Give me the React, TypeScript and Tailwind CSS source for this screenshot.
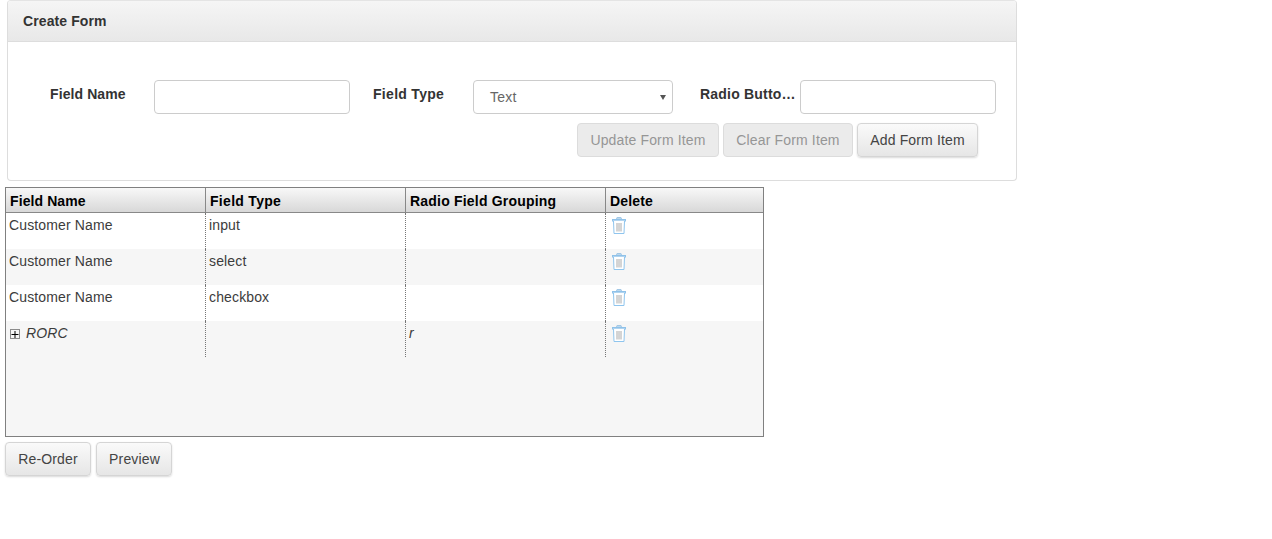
import React from "react";

const font = { fontFamily: '"Liberation Sans", Arial, sans-serif' };

function Trash() {
  return (
    <svg width="16" height="20" viewBox="0 0 16 20" fill="none">
      <path d="M5.5 3 L6 1.5 H10 L10.5 3" stroke="#a2c8e6" strokeWidth="1" fill="#bdd8ec" />
      <rect x="1.5" y="3.5" width="13" height="1.5" fill="#d3e6f4" stroke="#8fc2ea" strokeWidth="1" />
      <path d="M2.5 5 L3 17.5 H13 L13.5 5" stroke="#8fc5ee" strokeWidth="1" fill="#fff" />
      <path d="M6 7 V15.5 M8 7 V15.5 M10 7 V15.5" stroke="#aaaaaa" strokeWidth="1" />
    </svg>
  );
}

function PlusBox() {
  return (
    <svg width="10" height="10" viewBox="0 0 10 10" className="block shrink-0">
      <rect x="0.5" y="0.5" width="9" height="9" fill="none" stroke="#222" strokeDasharray="1 1" />
      <path d="M1.5 5.5 H8.5 M5 2 V9" stroke="#000" strokeWidth="1" />
    </svg>
  );
}

const btn =
  "h-[34px] rounded-[4px] border border-[#d5d5d5] text-[14px] text-[#444] tracking-[0.15px] bg-gradient-to-b from-[#fafafa] to-[#e6e6e6] shadow-[0_1px_2px_rgba(0,0,0,0.15)] flex items-center justify-center";
const disabledBtn =
  "h-[34px] rounded-[4px] border border-[#dcdcdc] text-[14px] text-[#969696] tracking-[0.15px] bg-[#ebebeb] flex items-center justify-center";
const input = "h-[34px] w-[196px] rounded-[4px] border border-[#ccc] bg-white shrink-0";
const label = "text-[14px] font-bold text-[#333] leading-[20px]";

const rows = [
  { name: "Customer Name", type: "input", group: "", alt: false },
  { name: "Customer Name", type: "select", group: "", alt: true },
  { name: "Customer Name", type: "checkbox", group: "", alt: false },
  { name: "RORC", type: "", group: "r", alt: true, tree: true },
];

const cellBorder = "border-r border-dotted border-r-[#777]";

export default function App() {
  return (
    <div style={font} className="w-[1272px] h-[539px] bg-white overflow-hidden">
      <div className="ml-[7px] w-[1010px] h-[181px] rounded-[4px] border border-[#ddd] border-t-[#e4e4e4] overflow-hidden">
        <div className="h-[41px] border-b border-[#ddd] bg-gradient-to-b from-[#f5f5f5] to-[#e8e8e8] pl-[15px] flex items-center">
          <span className="text-[14px] font-bold text-[#333] tracking-[0.1px]">Create Form</span>
        </div>
        <div className="pt-[38px]">
          <div className="flex items-start">
            <span className={`${label} ml-[42px] w-[104px] mt-[4px] tracking-[0.1px]`}>Field Name</span>
            <div className={input} />
            <span className={`${label} ml-[23px] w-[100px] mt-[4px] tracking-[0.3px]`}>Field Type</span>
            <div className="h-[34px] w-[200px] rounded-[4px] border border-[#ccc] bg-white shrink-0 flex items-center justify-between pl-[16px] pr-[6px]">
              <span className="text-[14px] text-[#666] tracking-[0.2px]">Text</span>
              <svg width="6" height="5" viewBox="0 0 6 5">
                <path d="M0 0 H6 L3 5 Z" fill="#555" />
              </svg>
            </div>
            <span className={`${label} ml-[27px] w-[100px] mt-[4px] whitespace-nowrap tracking-[0.2px]`}>Radio Butto…</span>
            <div className={input} />
          </div>
          <div className="flex justify-end gap-[4px] mt-[9px] pr-[38px]">
            <div className={`${disabledBtn} w-[142px]`}>Update Form Item</div>
            <div className={`${disabledBtn} w-[130px]`}>Clear Form Item</div>
            <div className={`${btn} w-[121px]`}>Add Form Item</div>
          </div>
        </div>
      </div>

      <div className="ml-[5px] mt-[6px] w-[759px] h-[250px] border border-[#808080] bg-[#f6f6f6] overflow-hidden">
        <div className="flex h-[25px] border-b border-[#888] bg-gradient-to-b from-[#f8f8f8] to-[#d8d8d8] text-[14px] font-bold text-black">
          <div className="w-[200px] border-r border-[#888] pl-[4px] pt-[3px] leading-[20px] tracking-[0.1px]">Field Name</div>
          <div className="w-[200px] border-r border-[#888] pl-[4px] pt-[3px] leading-[20px] tracking-[0.3px]">Field Type</div>
          <div className="w-[200px] border-r border-[#888] pl-[4px] pt-[3px] leading-[20px] tracking-[0.2px]">Radio Field Grouping</div>
          <div className="flex-1 pl-[4px] pt-[3px] leading-[20px] tracking-[0.15px]">Delete</div>
        </div>
        {rows.map((r, i) => (
          <div
            key={i}
            className={`flex h-[36px] text-[14px] text-[#3c3c3c] leading-[24px] tracking-[0.14px] ${r.alt ? "bg-[#f6f6f6]" : "bg-white"}`}
          >
            <div className={`w-[200px] ${cellBorder} pl-[3px] flex items-start gap-[6px] ${r.tree ? "italic" : ""}`}>
              {r.tree && (
                <span className="mt-[8px] ml-[1px]">
                  <PlusBox />
                </span>
              )}
              <span>{r.name}</span>
            </div>
            <div className={`w-[200px] ${cellBorder} pl-[3px]`}>{r.type}</div>
            <div className={`w-[200px] ${cellBorder} pl-[3px] ${r.tree ? "italic" : ""}`}>{r.group}</div>
            <div className="flex-1 pl-[5px] pt-[3px]">
              <Trash />
            </div>
          </div>
        ))}
      </div>

      <div className="ml-[5px] mt-[5px] flex gap-[5px]">
        <div className={`${btn} w-[86px]`}>Re-Order</div>
        <div className={`${btn} w-[76px] pl-[1px]`}>Preview</div>
      </div>
    </div>
  );
}
